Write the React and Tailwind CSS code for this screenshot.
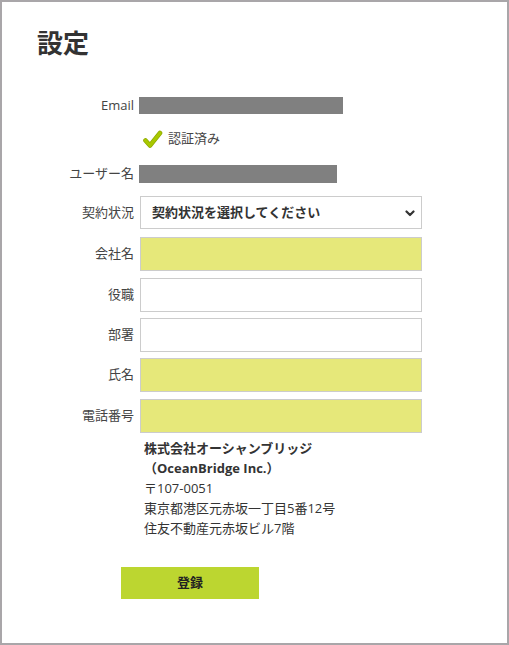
import React from "react";

const font = { fontFamily: '"Open Sans", "Noto Sans CJK JP", sans-serif' };

function Label({ children }) {
  return (
    <div className="w-[132px] shrink-0 pr-0 text-right text-[13px] text-[#444]">
      {children}
    </div>
  );
}

function InputRow({ label, yellow, mt }) {
  return (
    <div className={`flex items-center ${mt}`}>
      <Label>{label}</Label>
      <div
        className={`ml-[6px] h-[34px] w-[282px] border border-[#cccccc] ${
          yellow ? "bg-[#e6e87a]" : "bg-white"
        }`}
      />
    </div>
  );
}

export default function App() {
  return (
    <div
      className="w-[509px] h-[645px] border-2 border-[#a9a6a9] bg-white pt-[22px] text-[#333]"
      style={font}
    >
      <h1 className="ml-[35px] h-[39px] text-[26px] leading-[39px] font-bold text-[#333]">
        設定
      </h1>

      {/* Email */}
      <div className="mt-[34px] flex h-[17px] items-center">
        <Label>Email</Label>
        <div className="ml-[5px] h-[17px] w-[204px] bg-[#808080]" />
      </div>

      {/* verified */}
      <div className="mt-[15px] flex h-[20px] items-center pl-[139px]">
        <svg width="22" height="20" viewBox="0 0 22 20">
          <path
            d="M4.5 11.5 L9 16.5 L19 4"
            fill="none"
            stroke="#8fa800"
            strokeWidth="4.6"
            strokeLinecap="round"
            strokeLinejoin="round"
          />
          <path
            d="M4.5 11.5 L9 16.5 L19 4"
            fill="none"
            stroke="#a8c800"
            strokeWidth="3.2"
            strokeLinecap="round"
            strokeLinejoin="round"
          />
        </svg>
        <span className="ml-[5px] text-[13px] text-[#444]">認証済み</span>
      </div>

      {/* user name */}
      <div className="mt-[16px] flex h-[18px] items-center">
        <Label>ユーザー名</Label>
        <div className="ml-[5px] h-[18px] w-[198px] bg-[#808080]" />
      </div>

      {/* select */}
      <div className="mt-[13px] flex items-center">
        <Label>契約状況</Label>
        <div className="relative ml-[6px] flex h-[33px] w-[282px] items-center border border-[#cccccc] bg-white pl-[11px]">
          <span className="text-[13px] font-bold text-[#333]">契約状況を選択してください</span>
          <svg
            width="10"
            height="7"
            viewBox="0 0 10 7"
            className="absolute right-[6px] top-[13px]"
          >
            <path
              d="M1.5 1.5 L5 5 L8.5 1.5"
              fill="none"
              stroke="#333"
              strokeWidth="2.2"
              strokeLinecap="round"
              strokeLinejoin="round"
            />
          </svg>
        </div>
      </div>

      <InputRow label="会社名" yellow mt="mt-[8px]" />
      <InputRow label="役職" mt="mt-[7px]" />
      <InputRow label="部署" mt="mt-[6px]" />
      <InputRow label="氏名" yellow mt="mt-[6px]" />
      <InputRow label="電話番号" yellow mt="mt-[7px]" />

      <div className="mt-[5px] pl-[142px] text-[13px] leading-[20px] text-[#333]">
        <div className="font-bold">株式会社オーシャンブリッジ</div>
        <div className="font-bold">（OceanBridge Inc.）</div>
        <div>〒107-0051</div>
        <div>東京都港区元赤坂一丁目5番12号</div>
        <div>住友不動産元赤坂ビル7階</div>
      </div>

      <div className="mt-[29px] pl-[119px]">
        <button className="flex h-[32px] w-[138px] items-center justify-center bg-[#bcd630] text-[13px] font-bold text-[#222]">
          登録
        </button>
      </div>
    </div>
  );
}
